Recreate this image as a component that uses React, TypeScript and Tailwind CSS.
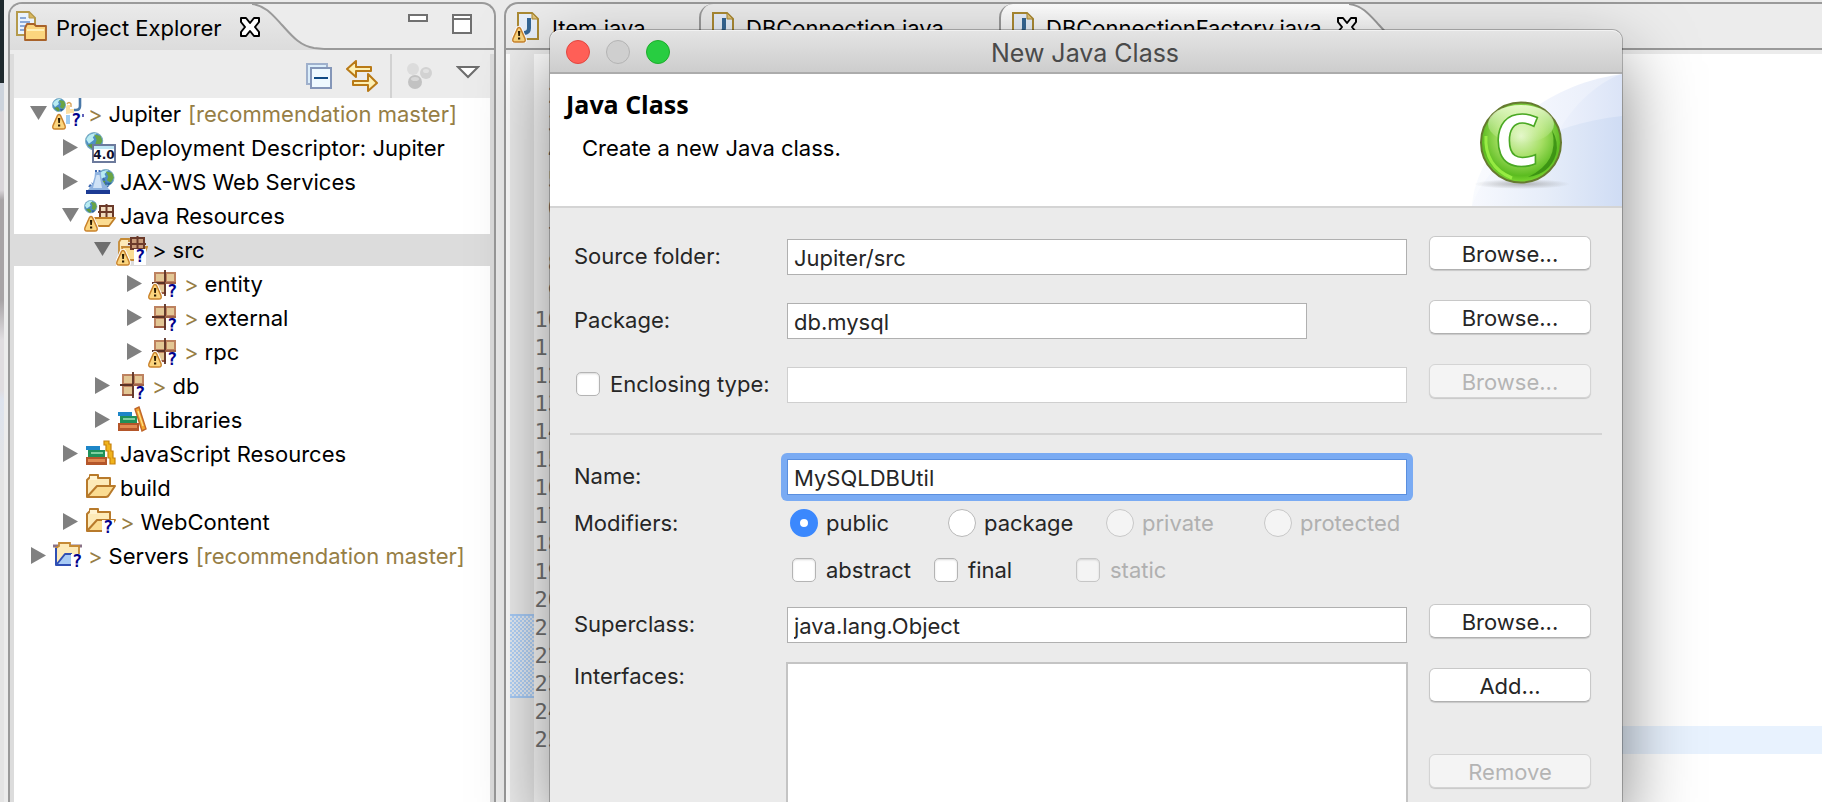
import React from "react";

const UI = "font-['Inter','Liberation_Sans',sans-serif]";

/* ---------- shared icon parts ---------- */

function Globe({ x = 0, y = 0, s = 1 }: { x?: number; y?: number; s?: number }) {
  return (
    <g transform={`translate(${x} ${y}) scale(${s})`}>
      <circle cx="7" cy="7" r="6.6" fill="#4d8fc4" stroke="#7fb0c4" strokeWidth="0.8" />
      <path d="M1 6 C2 2 6 0.5 9 1 L6 4 L7 6 L3 9 Z" fill="#b9ecf2" />
      <path d="M7 2 L12 3 L13.4 7 L11 11 L8 9 L9 6 Z" fill="#6aa544" />
      <path d="M2 10 L6 9 L8 12 L6 13.4 Z" fill="#5f9a3d" />
      <path d="M8 11 L12 11 L9 13.4 Z" fill="#2c5f9c" />
    </g>
  );
}

function Warning({ x = 0, y = 16 }: { x?: number; y?: number }) {
  return (
    <g transform={`translate(${x} ${y})`}>
      <path
        d="M5.4 1.6 Q7 -0.6 8.6 1.6 L13 11.6 Q14 15 11 15 L3 15 Q0 15 1 11.6 Z"
        fill="#fbd57e"
        stroke="#fff"
        strokeWidth="3.4"
      />
      <path
        d="M5.4 1.6 Q7 -0.6 8.6 1.6 L13 11.6 Q14 15 11 15 L3 15 Q0 15 1 11.6 Z"
        fill="#fbd57e"
        stroke="#c9822b"
        strokeWidth="1.4"
      />
      <path d="M5.9 4 h2.4 l-0.4 5 h-1.6 z M6 10.4 h2.2 v2.2 h-2.2 z" fill="#2a1a00" />
    </g>
  );
}

function Question({ x = 18, y = 16 }: { x?: number; y?: number }) {
  return (
    <g transform={`translate(${x} ${y})`}>
      <rect x="0" y="0" width="12" height="16" fill="#fff" />
      <text x="6" y="13.4" textAnchor="middle" fontFamily="DejaVu Sans Mono" fontWeight="700" fontSize="17" fill="#00008c">
        ?
      </text>
    </g>
  );
}

function Pkg() {
  return (
    <g transform="translate(4 2)">
      <rect x="2" y="2" width="22" height="22" fill="#bd8260" />
      <rect x="4" y="4" width="8" height="7" fill="#e3c795" />
      <rect x="15" y="4" width="7" height="7" fill="#e3c795" />
      <rect x="4" y="15" width="8" height="7" fill="#e3c795" />
      <rect x="15" y="15" width="7" height="7" fill="#e3c795" />
      <path d="M2 23 H24" stroke="#9c5a40" strokeWidth="2" />
      <path d="M13 0 V26 M0 13 H13" stroke="#5c3226" strokeWidth="1.8" />
      <path d="M13 13 H24" stroke="#9c5f44" strokeWidth="1.8" />
    </g>
  );
}

function FolderShape() {
  return (
    <>
      <path d="M3 25 V8 L6 5 V3 H14 V6 H26 V14" fill="#fdeab8" stroke="#b87a2b" strokeWidth="2" strokeLinejoin="round" />
      <path d="M6 4 h7 v4 h-7 z" fill="#fff3d0" />
      <path d="M3 25 L13 14 H31 L25 23 Q24 25 22 25 Z" fill="#fbdc92" stroke="#b87a2b" strokeWidth="2" strokeLinejoin="round" />
    </>
  );
}

function Svg({ children, size = 32 }: { children: React.ReactNode; size?: number }) {
  return (
    <svg width={size} height={size} viewBox="0 0 32 32" className="shrink-0" aria-hidden="true">
      {children}
    </svg>
  );
}

/* ---------- tree icons ---------- */

const ProjectIcon = () => (
  <Svg>
    <path d="M14 16 V9 L15 7 H18 V11 H22 V15 Z" fill="#fbdfa4" />
    <path d="M15 6 q2 -3 4 0 v3" fill="none" stroke="#d9a35a" strokeWidth="1.4" />
    <Globe />
    <path d="M14 17 h4 v9 h-4 z" fill="#9fcdf2" />
    <path d="M28 0 V8 Q28 12 24 12 H22" fill="none" stroke="#4a78a8" strokeWidth="2.6" />
    <path d="M31 16 v3" stroke="#3a3aa8" strokeWidth="1.6" />
    <Warning />
    <Question x={18} y={15} />
  </Svg>
);

const DescriptorIcon = () => (
  <Svg>
    <Globe x={1} y={0} s={1.3} />
    <rect x="9" y="13" width="22" height="17" fill="#fff" stroke="#6c7a9c" strokeWidth="2" />
    <rect x="10" y="14" width="20" height="3" fill="#bfe6f4" />
    <text x="20" y="27" textAnchor="middle" fontFamily="DejaVu Sans" fontWeight="700" fontSize="12" fill="#10102c">
      4.0
    </text>
  </Svg>
);

const WebServiceIcon = () => (
  <Svg>
    <Globe x={13} y={3} s={1.25} />
    <path d="M11 6 h6 q-1 9 9 18 v1 H3 q8 -8 8 -19 z" fill="#8fb3e0" />
    <path d="M12.500 9 L9 22 H18 L15.500 9 Z" fill="#cfe2f6" />
    <path d="M11 5 h6" stroke="#3c68b0" strokeWidth="2" strokeDasharray="2 1.500" />
    <path d="M5 21 l3 -4 M19 12 l5 9" stroke="#3c68b0" strokeWidth="2" strokeDasharray="3 1.500" />
    <rect x="2" y="24" width="24" height="4" fill="#1c3a94" />
  </Svg>
);

const JavaResourcesIcon = () => (
  <Svg>
    <g transform="translate(14 4)">
      <path d="M2 2 h13 v13 h-13 z" fill="#f0dcc0" stroke="#6b3a2a" strokeWidth="2" />
      <path d="M8.500 0 V15 M0 8 H16" stroke="#6b3a2a" strokeWidth="2" />
    </g>
    <Globe x={0} y={0} s={0.95} />
    <path d="M10 18 H31 L25 26 H12 Z" fill="#fbdc92" stroke="#c07f28" strokeWidth="1.8" strokeLinejoin="round" />
    <Warning />
  </Svg>
);

const SrcIcon = () => (
  <Svg>
    <path d="M3 22 V8 L5 5 H13 V8" fill="#fdeab8" stroke="#c58a35" strokeWidth="1.8" />
    <path d="M6 13 H31 L26 26 H8 Z" fill="#fbdc92" stroke="#c58a35" strokeWidth="1.8" />
    <path d="M15 4 h13 v11 h-13 z" fill="#c99b78" stroke="#6b3a2a" strokeWidth="2" />
    <path d="M21.500 2 V17 M12 10 H30" stroke="#6b3a2a" strokeWidth="2" />
    <Warning />
    <Question x={18} y={15} />
  </Svg>
);

const PackageIcon = () => (
  <Svg>
    <Pkg />
    <Question />
  </Svg>
);

const PackageWarnIcon = () => (
  <Svg>
    <Pkg />
    <Warning />
    <Question />
  </Svg>
);

function Books() {
  return (
    <>
      <rect x="2" y="8" width="14" height="4" fill="#1d86c8" />
      <rect x="4" y="12" width="17" height="7" fill="#1f9159" />
      <rect x="7" y="14" width="12" height="2" fill="#7fd0a0" />
      <rect x="2" y="19" width="21" height="8" fill="#b4562a" />
      <rect x="4" y="21" width="17" height="3" fill="#e08b52" />
    </>
  );
}

const LibrariesIcon = () => (
  <Svg>
    <Books />
    <path d="M19 5 L23 3 L30 25 L26 27 Z" fill="#f3a62c" stroke="#c0662a" strokeWidth="1.4" />
    <path d="M22 7 L27 22" stroke="#ffe08a" strokeWidth="1.2" />
  </Svg>
);

const JsResourcesIcon = () => (
  <Svg>
    <Books />
    <path d="M20 3 h5 v3 h2 v7 h2 v7 h2 v6 h-5 v-6 h-2 v-7 h-2 v-6 h-2 z" fill="#f0b31c" stroke="#c8820c" strokeWidth="1.2" />
  </Svg>
);

const FolderIcon = () => (
  <Svg>
    <FolderShape />
  </Svg>
);

const FolderQuestionIcon = () => (
  <Svg>
    <FolderShape />
    <Question x={18} y={14} />
  </Svg>
);

const ServersIcon = () => (
  <Svg>
    <path d="M1 6 H30" stroke="#8a7286" strokeWidth="3" />
    <path d="M4 25 V8 L7 6 V3 H18 V6 H27 V14" fill="#fdeab8" stroke="#c58a35" strokeWidth="1.8" />
    <path d="M4 24 L13 14 H29 L26 25 H5 Z" fill="#a8cbf5" />
    <path d="M4 8 V25 H22 M5 24 L13 14 H20" fill="none" stroke="#2f4fb4" strokeWidth="2" strokeLinejoin="round" />
    <Question x={19} y={14} />
  </Svg>
);

/* ---------- project tree ---------- */

type Node = {
  indent: string;
  state: "open" | "closed" | "leaf";
  icon: React.ReactNode;
  label: string;
  changed?: boolean;
  repo?: string;
  selected?: boolean;
};

const nodes: Node[] = [
  { indent: "pl-4", state: "open", icon: <ProjectIcon />, label: "Jupiter", changed: true, repo: "[recommendation master]" },
  { indent: "pl-12", state: "closed", icon: <DescriptorIcon />, label: "Deployment Descriptor: Jupiter" },
  { indent: "pl-12", state: "closed", icon: <WebServiceIcon />, label: "JAX-WS Web Services" },
  { indent: "pl-12", state: "open", icon: <JavaResourcesIcon />, label: "Java Resources" },
  { indent: "pl-20", state: "open", icon: <SrcIcon />, label: "src", changed: true, selected: true },
  { indent: "pl-28", state: "closed", icon: <PackageWarnIcon />, label: "entity", changed: true },
  { indent: "pl-28", state: "closed", icon: <PackageIcon />, label: "external", changed: true },
  { indent: "pl-28", state: "closed", icon: <PackageWarnIcon />, label: "rpc", changed: true },
  { indent: "pl-20", state: "closed", icon: <PackageIcon />, label: "db", changed: true },
  { indent: "pl-20", state: "closed", icon: <LibrariesIcon />, label: "Libraries" },
  { indent: "pl-12", state: "closed", icon: <JsResourcesIcon />, label: "JavaScript Resources" },
  { indent: "pl-12", state: "leaf", icon: <FolderIcon />, label: "build" },
  { indent: "pl-12", state: "closed", icon: <FolderQuestionIcon />, label: "WebContent", changed: true },
  { indent: "pl-4", state: "closed", icon: <ServersIcon />, label: "Servers", changed: true, repo: "[recommendation master]" },
];

function Arrow({ state, dark }: { state: Node["state"]; dark?: boolean }) {
  return (
    <svg width="17" height="18" viewBox="0 0 17 18" className="shrink-0" aria-hidden="true">
      {state === "open" && <path d="M0 1 H17 L8.500 15 Z" fill={dark ? "#6e6e6e" : "#808080"} />}
      {state === "closed" && <path d="M1 0 L16 8.500 L1 17 Z" fill="#808080" />}
    </svg>
  );
}

function TreeRow({ node }: { node: Node }) {
  const tone = node.selected ? "text-black" : "text-[#967e45]";
  return (
    <li
      role="treeitem"
      aria-selected={!!node.selected}
      className={`flex h-8 items-center whitespace-nowrap ${node.indent} ${node.selected ? "bg-[#dcdcdc]" : ""}`}
    >
      <Arrow state={node.state} dark={node.selected} />
      <span className="ml-[5px] flex">{node.icon}</span>
      <span className="ml-1 flex gap-1.5">
        {node.changed && <span className={tone}>&gt;</span>}
        <span>{node.label}</span>
        {node.repo && <span className="pl-px text-[#967e45]">{node.repo}</span>}
      </span>
    </li>
  );
}

/* ---------- view chrome ---------- */

function CloseX() {
  return (
    <svg width="22" height="22" viewBox="0 0 22 22" className="shrink-0" aria-hidden="true">
      <path
        d="M2 2 H7 L11 7 L15 2 H20 V6 L16 11 L20 16 V20 H15 L11 15 L7 20 H2 V16 L6 11 L2 6 Z"
        fill="#fff"
        stroke="#000"
        strokeWidth="2"
        strokeLinejoin="round"
      />
    </svg>
  );
}

function TabSlope({ fill }: { fill: "active" | "plain" }) {
  return (
    <svg width="72" height="46" viewBox="0 0 72 46" className="shrink-0" aria-hidden="true">
      <defs>
        <linearGradient id={`slope-${fill}`} x1="0" y1="0" x2="0" y2="1">
          <stop offset="0" stopColor={fill === "active" ? "#ffffff" : "#eaeaea"} />
          <stop offset="1" stopColor={fill === "active" ? "#f0f0f0" : "#dcdcdc"} />
        </linearGradient>
      </defs>
      <path d="M0 0 C14 2 20 10 30 21 S48 42 62 44 L72 46 H0 Z" fill={`url(#slope-${fill})`} />
      <path d="M0 0 C14 2 20 10 30 21 S48 42 62 44 L72 45" fill="none" stroke="#9a9a9a" strokeWidth="2" />
    </svg>
  );
}

function ExplorerIcon() {
  return (
    <Svg>
      <path d="M1 1 H13 L19 7 V24 H1 Z" fill="#eaf3fd" stroke="#b59a4c" strokeWidth="2" />
      <path d="M13 1 V7 H19 Z" fill="#d9b65c" stroke="#b59a4c" strokeWidth="1" />
      <path d="M4 7 h6 M4 11 h10 M4 15 h6 M4 19 h5" stroke="#6d93cc" strokeWidth="1.6" />
      <path d="M9 29 V17 L11 13 H18 L20 15 H30 V29 Z" fill="#fbd57e" stroke="#a8622a" strokeWidth="1.8" strokeLinejoin="round" />
      <path d="M11 19 H28" stroke="#fff0b8" strokeWidth="2" />
    </Svg>
  );
}

function ProjectExplorer() {
  return (
    <section aria-label="Project Explorer" className="mt-0.5 ml-1 flex w-[488px] shrink-0 flex-col rounded-t-[14px] border-2 border-b-0 border-[#9a9a9a] bg-[#ececec]">
      <header className="flex h-[46px] shrink-0">
        <div className="flex w-[242px] items-center rounded-tl-xl bg-linear-to-b from-[#eaeaea] to-[#dcdcdc] pl-1.5">
          <ExplorerIcon />
          <h2 className="ml-2 pt-0.5 text-[22px] leading-7 whitespace-nowrap">Project Explorer</h2>
          <button type="button" aria-label="Close Project Explorer" className="relative z-10 mr-[-9px] ml-auto">
            <CloseX />
          </button>
        </div>
        <TabSlope fill="plain" />
        <div className="flex flex-1 items-start justify-end gap-6 border-b-2 border-[#9a9a9a] pt-2.5 pr-[22px]">
          <button type="button" aria-label="Minimize" className="h-2 w-5 border-2 border-[#707070] bg-white" />
          <button type="button" aria-label="Maximize" className="flex h-5 w-5 items-start border-2 border-[#707070] bg-white">
            <span className="h-1 w-full border-b-2 border-[#707070]" />
          </button>
        </div>
      </header>
      <div className="mt-1 flex flex-1 flex-col border-x-4 border-[#dcdcdc] bg-white">
        <div className="flex h-11 shrink-0 items-stretch justify-end bg-[#ececec] pr-2.5">
          <button type="button" aria-label="Collapse All" className="mr-3.5 flex items-center">
            <svg width="26" height="26" viewBox="0 0 26 26" aria-hidden="true">
              <rect x="1" y="1" width="20" height="20" fill="#dbeefb" stroke="#9fb0cc" strokeWidth="2" />
              <rect x="5" y="5" width="20" height="20" fill="#eef9ff" stroke="#8496b8" strokeWidth="2" />
              <path d="M8 15 H22" stroke="#0f4a84" strokeWidth="2" />
            </svg>
          </button>
          <button type="button" aria-label="Link with Editor" className="mr-3 flex items-center">
            <svg width="32" height="32" viewBox="0 0 32 32" aria-hidden="true">
              <path d="M1 9 L10 1 V7 H25 V11 H10 V17 Z" fill="#fdf0b4" stroke="#b97a16" strokeWidth="2" strokeLinejoin="round" />
              <path d="M31 23 L22 14 V21 H7 V25 H22 V31 Z" fill="#fdf0b4" stroke="#b97a16" strokeWidth="2" strokeLinejoin="round" />
            </svg>
          </button>
          <span className="w-0.5 bg-[#d2d2d2]" />
          <button type="button" aria-label="Focus on Active Task" disabled className="ml-3 flex items-center">
            <svg width="30" height="28" viewBox="0 0 30 28" aria-hidden="true">
              <circle cx="9" cy="7" r="6" fill="#dcdcdc" />
              <circle cx="22" cy="11" r="6" fill="#d2d2d2" />
              <circle cx="11" cy="20" r="7" fill="#c2c2c2" />
              <ellipse cx="11" cy="17" rx="4" ry="2" fill="#d8d8d8" />
              <ellipse cx="22" cy="9" rx="3" ry="2" fill="#e2e2e2" />
            </svg>
          </button>
          <button type="button" aria-label="View Menu" className="ml-[22px] flex items-start pt-3">
            <svg width="24" height="14" viewBox="0 0 24 14" aria-hidden="true">
              <path d="M2 1 H22 L12 11 Z" fill="#fff" stroke="#6e6e6e" strokeWidth="2" />
            </svg>
          </button>
        </div>
        <ul role="tree" className="flex flex-col gap-0.5 text-[22px] leading-8">
          {nodes.map((n) => (
            <TreeRow key={n.label} node={n} />
          ))}
        </ul>
      </div>
    </section>
  );
}

/* ---------- editor ---------- */

function JavaFileIcon({ warn }: { warn?: boolean }) {
  return (
    <Svg>
      <path d="M6 2 H20 L26 8 V28 H6 Z" fill="#e8f0fb" stroke="#ab8a34" strokeWidth="2" />
      <path d="M20 2 V8 H26 Z" fill="#e2c47a" stroke="#ab8a34" strokeWidth="1" />
      <path d="M17 7 V17 Q17 22 12 22" fill="none" stroke="#356796" strokeWidth="4" />
      {warn && <Warning x={0} y={16} />}
    </Svg>
  );
}

function Editor() {
  const lines = Array.from({ length: 25 }, (_, i) => i + 1);
  return (
    <section aria-label="Editor" className="mt-0.5 ml-2 flex min-w-0 flex-1 flex-col rounded-tl-[14px] border-t-2 border-l-2 border-[#9a9a9a] bg-[#ececec]">
      <div role="tablist" className="flex h-[46px] shrink-0 text-[22px] leading-7 whitespace-nowrap">
        <div role="tab" className="flex w-[193px] items-center border-b-2 border-[#9a9a9a] pt-0.5 pl-1.5">
          <JavaFileIcon warn />
          <span className="ml-2 pt-0.5">Item.java</span>
        </div>
        <div role="tab" className="flex w-[300px] items-center rounded-tl-[14px] border-b-2 border-l-2 border-[#9a9a9a] pt-0.5 pl-1.5">
          <JavaFileIcon />
          <span className="ml-[7px] pt-0.5">DBConnection.java</span>
        </div>
        <div role="tab" aria-selected="true" className="flex w-[350px] items-center rounded-tl-[14px] border-l-2 border-[#9a9a9a] bg-linear-to-b from-white to-[#f0f0f0] pl-1.5">
          <JavaFileIcon />
          <span className="ml-[7px] pt-0.5">DBConnectionFactory.java</span>
          <button type="button" aria-label="Close editor" className="relative z-10 mr-[-9px] ml-auto">
            <CloseX />
          </button>
        </div>
        <TabSlope fill="active" />
        <div className="flex-1 border-b-2 border-[#9a9a9a]" />
      </div>
      <div className="mt-1 flex flex-1 bg-white pl-1">
        <div className="w-6 shrink-0 bg-[#ececec] pt-[560px]">
          <div className="h-[84px] border-y-2 border-[#a9cdf8] bg-[repeating-conic-gradient(#b3d4fb_0_25%,#e6edf6_0_50%)] bg-size-[4px_4px]" />
        </div>
        <ol className="flex-1 font-['DejaVu_Sans_Mono',monospace] text-[22px] leading-7 text-[#787878]">
          {lines.map((n) => (
            <li key={n} className="flex h-7">
              <span className="w-[27px] shrink-0 text-right">{n}</span>
              <span className={`ml-3 flex-1 ${n === 25 ? "bg-[#e8f2fe]" : ""}`} />
            </li>
          ))}
        </ol>
      </div>
    </section>
  );
}

/* ---------- dialog ---------- */

const fieldBase =
  "h-9 min-w-0 flex-1 border bg-white px-1.5 pt-0.5 text-[22px] leading-8 text-[#262626] outline-none";
const checkBase =
  "h-6 w-6 shrink-0 appearance-none rounded-[5px] border border-[#b4b4b4] bg-white shadow-[inset_0_1px_2px_rgba(0,0,0,0.15)] disabled:border-[#c6c6c6] disabled:bg-[#f4f4f4]";

function PushButton({ children, disabled, label }: { children: React.ReactNode; disabled?: boolean; label: string }) {
  return (
    <button
      type="button"
      aria-label={label}
      disabled={disabled}
      className="h-[34px] w-[162px] shrink-0 rounded-md border border-[#c8c8c8] border-b-[#b0b0b0] bg-white pt-0.5 text-[22px] leading-7 text-[#262626] shadow-[0_1px_1px_rgba(0,0,0,0.15)] disabled:border-[#d4d4d4] disabled:bg-[#f4f4f4] disabled:text-[#b4b4b4]"
    >
      {children}
    </button>
  );
}

function FormRow({ label, id, children, button }: { label: React.ReactNode; id: string; children: React.ReactNode; button?: React.ReactNode }) {
  return (
    <div className="flex h-9 items-center">
      <div className="mb-0.5 w-[213px] shrink-0">
        {typeof label === "string" ? <label htmlFor={id}>{label}</label> : label}
      </div>
      <div className="flex min-w-0 flex-1">{children}</div>
      <div className="mb-2 ml-[22px] w-[162px] shrink-0">{button}</div>
    </div>
  );
}

function ClassBanner() {
  return (
    <svg width="190" height="132" viewBox="0 0 190 132" className="shrink-0" aria-hidden="true">
      <defs>
        <linearGradient id="sky" x1="0" x2="1">
          <stop offset="0" stopColor="#f9fbfe" />
          <stop offset="0.5" stopColor="#f2f5fd" />
          <stop offset="1" stopColor="#e6ecf9" />
        </linearGradient>
        <linearGradient id="sky2" x1="0" x2="1">
          <stop offset="0" stopColor="#eef2fc" />
          <stop offset="1" stopColor="#dbe4f7" />
        </linearGradient>
        <linearGradient id="sky3" x1="0" x2="1">
          <stop offset="0" stopColor="#f7f9fe" />
          <stop offset="0.5" stopColor="#e6edf9" />
          <stop offset="1" stopColor="#cfdcf4" />
        </linearGradient>
        <radialGradient id="ball" cx="0.5" cy="0.42" r="0.62">
          <stop offset="0" stopColor="#e2f6c8" />
          <stop offset="0.45" stopColor="#a4de62" />
          <stop offset="0.8" stopColor="#5cbc20" />
          <stop offset="1" stopColor="#8ee83c" />
        </radialGradient>
        <linearGradient id="gloss" x1="0" y1="0" x2="0" y2="1">
          <stop offset="0" stopColor="#f2ffd8" stopOpacity="0.9" />
          <stop offset="1" stopColor="#f2ffd8" stopOpacity="0" />
        </linearGradient>
        <radialGradient id="ground">
          <stop offset="0" stopColor="#8a8a8a" stopOpacity="0.6" />
          <stop offset="1" stopColor="#8a8a8a" stopOpacity="0" />
        </radialGradient>
      </defs>
      <path d="M40 132 C42 88 90 14 190 0 V132 Z" fill="url(#sky)" />
      <path d="M124 64 C134 38 164 8 190 0 V64 Z" fill="url(#sky2)" />
      <path d="M40 132 C56 82 118 50 190 42 V132 Z" fill="url(#sky3)" />
      <ellipse cx="90" cy="110" rx="48" ry="5" fill="url(#ground)" />
      <circle cx="89" cy="68.500" r="40" fill="url(#ball)" stroke="#667a30" strokeWidth="2" />
      <path d="M120 56 Q128 88 96 103 Q118 100 124 80 Q127 68 120 56 Z" fill="#348a10" opacity="0.8" />
      <ellipse cx="89" cy="50" rx="33" ry="19" fill="url(#gloss)" />
      <path d="M54 62 Q52 92 80 104" fill="none" stroke="#a4f54a" strokeWidth="3" opacity="0.8" />
      <text x="85" y="92" textAnchor="middle" fontFamily="Open Sans" fontWeight="700" fontSize="72" fill="#fff" stroke="#4aa823" strokeWidth="1.6">
        C
      </text>
    </svg>
  );
}

const access = [
  { name: "public", checked: true },
  { name: "package" },
  { name: "private", disabled: true },
  { name: "protected", disabled: true },
];
const flags = [{ name: "abstract" }, { name: "final" }, { name: "static", disabled: true }];

function NewClassDialog() {
  return (
    <div
      role="dialog"
      aria-labelledby="dialog-title"
      className="absolute top-[30px] right-[200px] bottom-0 left-[550px] z-20 flex flex-col rounded-t-[10px] bg-[#ebebeb] text-[22px] leading-7 text-[#262626] shadow-[0_0_0_1px_rgba(0,0,0,0.25),0_30px_72px_rgba(0,0,0,0.5)]"
    >
      <div className="flex h-11 shrink-0 items-center gap-4 rounded-t-[10px] border-t border-b-2 border-t-[#f2f2f2] border-b-[#acacac] bg-linear-to-b from-[#e4e4e4] to-[#cdcdcd] pl-4">
        <button type="button" aria-label="Close" className="h-6 w-6 rounded-full border border-[#e2463f] bg-[#ff5f57]" />
        <button type="button" aria-label="Minimize" disabled className="h-6 w-6 rounded-full border border-[#b4b4b4] bg-[#cfcfcf]" />
        <button type="button" aria-label="Zoom" className="h-6 w-6 rounded-full border border-[#1dad2b] bg-[#28cd41]" />
        <h1 id="dialog-title" className="mr-[138px] flex-1 pt-0.5 text-center text-[25px] leading-8 text-[#4a4a4a]">
          New Java Class
        </h1>
      </div>

      <div className="flex h-[134px] shrink-0 justify-between border-b-2 border-[#d4d4d4] bg-white text-black">
        <div className="pt-3.5 pl-4">
          <h2 className="font-['Open_Sans','Noto_Sans',sans-serif] text-[25px] leading-8 font-bold">Java Class</h2>
          <p className="mt-3.5 pl-4 leading-7">Create a new Java class.</p>
        </div>
        <ClassBanner />
      </div>

      <form className="flex flex-1 flex-col pt-[31px]" onSubmit={(e) => e.preventDefault()}>
        <div className="flex flex-col gap-7 pr-[31px] pl-6">
          <FormRow id="source" label="Source folder:" button={<PushButton label="Browse source folder">Browse...</PushButton>}>
            <input id="source" defaultValue="Jupiter/src" className={`${fieldBase} border-[#b0b0b0]`} />
          </FormRow>
          <FormRow id="package" label="Package:" button={<PushButton label="Browse package">Browse...</PushButton>}>
            <input id="package" defaultValue="db.mysql" className={`${fieldBase} mr-[100px] border-[#b0b0b0]`} />
          </FormRow>
          <FormRow
            id="enclosing"
            label={
              <label className="flex items-center gap-2.5 pl-0.5">
                <input type="checkbox" className={checkBase} />
                Enclosing type:
              </label>
            }
            button={<PushButton label="Browse enclosing type" disabled>Browse...</PushButton>}
          >
            <input id="enclosing" aria-label="Enclosing type" disabled className={`${fieldBase} border-[#cfcfcf]`} />
          </FormRow>
        </div>

        <hr className="mx-5 mt-[30px] mb-6 border-t-2 border-[#d4d4d4]" />

        <div className="flex flex-1 flex-col pr-[31px] pl-6">
          <FormRow id="name" label="Name:">
            <div className="-m-1.5 flex min-w-0 flex-1 rounded-md bg-[#7aabf3] p-1.5">
              <input id="name" defaultValue="MySQLDBUtil" className={`${fieldBase} border-[#5a8fdf]`} />
            </div>
          </FormRow>

          <div className="mt-3.5 flex">
            <span className="w-[213px] shrink-0">Modifiers:</span>
            <div role="radiogroup" aria-label="Access" className="grid grid-cols-[repeat(4,158px)] pl-[3px]">
              {access.map((a) => (
                <label key={a.name} className={`flex items-center gap-2 ${a.disabled ? "text-[#b0b0b0]" : ""}`}>
                  <input
                    type="radio"
                    name="access"
                    defaultChecked={a.checked}
                    disabled={a.disabled}
                    className="h-7 w-7 shrink-0 appearance-none rounded-full border border-[#b8b8b8] bg-white checked:border-[10px] checked:border-[#3b88fd] disabled:border-[#c8c8c8] disabled:bg-[#f4f4f4]"
                  />
                  {a.name}
                </label>
              ))}
            </div>
          </div>

          <div className="mt-[21px] grid h-6 grid-cols-[repeat(3,142px)] pl-[218px] leading-6">
            {flags.map((f) => (
              <label key={f.name} className={`flex items-center gap-2.5 ${f.disabled ? "text-[#b0b0b0]" : ""}`}>
                <input type="checkbox" disabled={f.disabled} className={checkBase} />
                {f.name}
              </label>
            ))}
          </div>

          <div className="mt-[25px]">
            <FormRow id="superclass" label="Superclass:" button={<PushButton label="Browse superclass">Browse...</PushButton>}>
              <input id="superclass" defaultValue="java.lang.Object" className={`${fieldBase} border-[#b0b0b0]`} />
            </FormRow>
          </div>

          <div className="mt-[19px] flex flex-1">
            <label htmlFor="interfaces" className="w-[212px] shrink-0">
              Interfaces:
            </label>
            <textarea id="interfaces" className="min-w-0 flex-1 resize-none border-2 border-b-0 border-[#c4c4c4] bg-white outline-none" />
            <div className="ml-[21px] flex flex-col gap-[52px] pt-1.5">
              <PushButton label="Add interface">Add...</PushButton>
              <PushButton label="Remove interface" disabled>
                Remove
              </PushButton>
            </div>
          </div>
        </div>
      </form>
    </div>
  );
}

export default function App() {
  return (
    <main className={`relative flex h-screen overflow-hidden bg-[#ececec] text-black ${UI}`}>
      <div className="w-1 shrink-0 bg-[linear-gradient(#1f2a2e_0_83px,#ccd3dc_83px_110px,#d9d5d9_112px_190px,#a8a4a6_200px_300px,#e0dde0_340px_390px,#dde3ee_400px,#e4e4e4_480px)]" />
      <ProjectExplorer />
      <Editor />
      <NewClassDialog />
    </main>
  );
}
